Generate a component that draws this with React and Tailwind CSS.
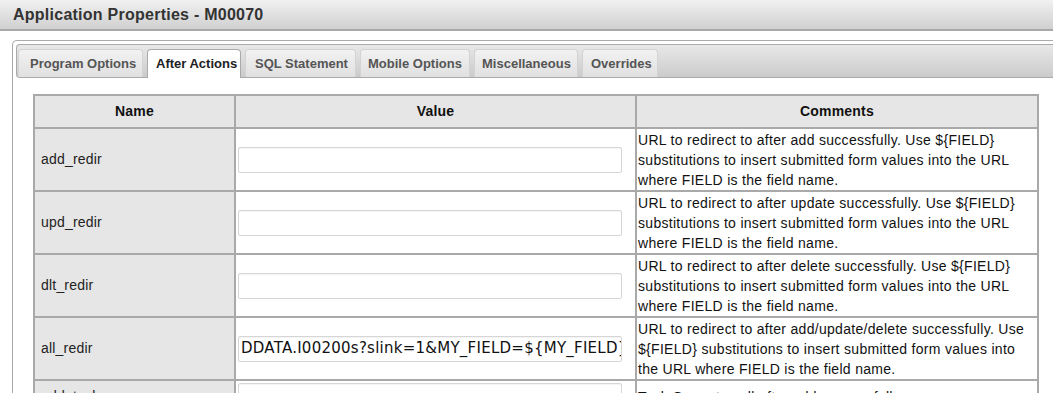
import React from "react";

const tabs = [
  { t: "Program Options", w: "w-[125px] pl-[11px]" },
  { t: "After Actions", w: "w-[94px] pl-[8px]" },
  { t: "SQL Statement", w: "w-[111px] pl-[9px]" },
  { t: "Mobile Options", w: "w-[110px] pl-[7px]" },
  { t: "Miscellaneous", w: "w-[104px] pl-[7px]" },
  { t: "Overrides", w: "w-[76px] pl-[8px]" },
];

const rows = [
  { name: "add_redir", value: "", comment: "URL to redirect to after add successfully. Use ${FIELD} substitutions to insert submitted form values into the URL where FIELD is the field name." },
  { name: "upd_redir", value: "", comment: "URL to redirect to after update successfully. Use ${FIELD} substitutions to insert submitted form values into the URL where FIELD is the field name." },
  { name: "dlt_redir", value: "", comment: "URL to redirect to after delete successfully. Use ${FIELD} substitutions to insert submitted form values into the URL where FIELD is the field name." },
  { name: "all_redir", value: "DDATA.I00200s?slink=1&MY_FIELD=${MY_FIELD}", comment: "URL to redirect to after add/update/delete successfully. Use ${FIELD} substitutions to insert submitted form values into the URL where FIELD is the field name." },
  { name: "add_task", value: "", comment: "Task Query to call after add successfully." },
];

export default function App() {
  return (
    <div className="w-[1053px] h-[393px] overflow-hidden bg-white font-['Liberation_Sans',Arial,sans-serif] text-[#222]">
      <div className="h-[31px] bg-gradient-to-b from-[#f1f1f1] to-[#d0d0d0] border-b-2 border-[#a9a9a9] pl-[13px] flex items-center">
        <h1 className="text-[16px] font-bold text-[#333] leading-none tracking-[0.25px]">Application Properties - M00070</h1>
      </div>
      <div className="ml-[12px] mt-[9px] border border-r-0 border-[#aaaaaa] rounded-tl-[5px] pt-[3px] pl-[3px] h-[400px]">
        <div className="h-[34px] flex items-end border border-r-0 border-[#aaaaaa] rounded-l-[4px] bg-gradient-to-b from-[#e8e8e8] to-[#cbcbcb] pl-[1px] gap-[4px]">
          {tabs.map((tab, i) => {
            const active = i === 1;
            return (
              <div
                key={tab.t}
                className={
                  tab.w +
                  (active
                    ? " h-[29px] -mb-px flex items-center whitespace-nowrap bg-white border border-b-0 border-[#aaaaaa] rounded-t-[4px] text-[13px] font-bold text-[#212121]"
                    : " h-[28px] flex items-center whitespace-nowrap bg-gradient-to-b from-[#f2f2f2] to-[#e0e0e0] border border-b-0 border-[#d3d3d3] rounded-t-[4px] text-[13px] font-bold text-[#555555]")
                }
              >
                {tab.t}
              </div>
            );
          })}
        </div>
        <table className="ml-[17px] mt-[16px] border-collapse text-[14px] w-[1004px] table-fixed">
          <colgroup>
            <col className="w-[201px]" />
            <col className="w-[401px]" />
            <col className="w-[402px]" />
          </colgroup>
          <thead>
            <tr className="h-[33px] bg-[#e6e6e6]">
              <th className="border-2 border-[#a9a9a9] font-bold text-[#111] tracking-[0.2px]">Name</th>
              <th className="border-2 border-[#a9a9a9] font-bold text-[#111] tracking-[0.2px]">Value</th>
              <th className="border-2 border-[#a9a9a9] font-bold text-[#111] tracking-[0.2px]">Comments</th>
            </tr>
          </thead>
          <tbody>
            {rows.map((r) => (
              <tr key={r.name}>
                <td className="border-2 border-[#a9a9a9] bg-[#e6e6e6] pl-[6px] align-middle text-[#222] tracking-[0.2px]">{r.name}</td>
                <td className="border-2 border-[#a9a9a9] pl-[2px] py-[2px] align-middle">
                  <div className="w-[384px] h-[26px] border border-[#d6d6d6] rounded-[2px] bg-white shadow-[inset_0_1px_1px_rgba(0,0,0,0.05)] pl-[2px] flex items-center overflow-hidden whitespace-nowrap font-['DejaVu_Sans',Verdana,sans-serif] text-[15px] tracking-[0.25px] text-[#111]">
                    {r.value}
                  </div>
                </td>
                <td className="border-2 border-[#a9a9a9] pl-[1px] pr-[2px] pt-[1px] pb-0 align-middle leading-[20px] text-[#111] tracking-[0.3px]">{r.comment}</td>
              </tr>
            ))}
          </tbody>
        </table>
      </div>
    </div>
  );
}
